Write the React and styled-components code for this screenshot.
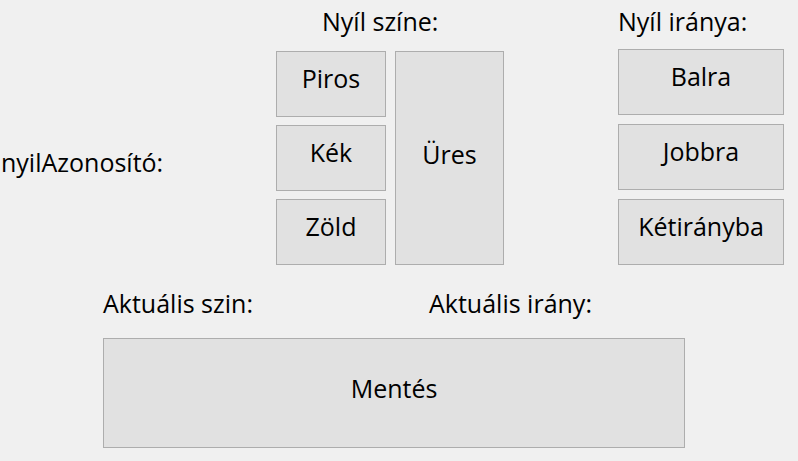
import React from 'react'
import styled, {createGlobalStyle} from 'styled-components'

const GlobalStyle = createGlobalStyle`
  html, body {
    margin: 0;
    padding: 0;
    background: #f0f0f0;
  }
  body {
    font-family: "Open Sans", "Noto Sans", sans-serif;
    color: #000;
  }
`

const Window = styled.div`
  width: 798px;
  height: 461px;
  background: #f0f0f0;
  overflow: hidden;
  display: flex;
  flex-direction: column;
  font-size: 25px;
`

const Top = styled.div`
  display: flex;
  flex-direction: row;
`

const IdLabel = styled.div`
  width: 276px;
  padding-left: 1px;
  box-sizing: border-box;
  line-height: 34px;
  padding-top: 145px;
`

const Group = styled.div`
  display: flex;
  flex-direction: column;
  margin-left: ${p => p.offset || 0}px;
`

const Heading = styled.div`
  line-height: 34px;
  padding-top: 4px;
  margin-left: ${p => p.indent || 0}px;
  margin-bottom: ${p => p.gap}px;
`

const ButtonRow = styled.div`
  display: flex;
  flex-direction: row;
  gap: 9px;
`

const ButtonStack = styled.div`
  display: flex;
  flex-direction: column;
  gap: ${p => p.gap || 8}px;
`

const Btn = styled.button`
  width: ${p => p.w}px;
  height: ${p => p.h}px;
  box-sizing: border-box;
  background: #e1e1e1;
  border: 1px solid #adadad;
  border-radius: 0;
  margin: 0;
  padding: 0 0 ${p => p.lift ?? 12}px;
  font-family: "Open Sans", "Noto Sans", sans-serif;
  font-size: 25px;
  line-height: 34px;
  color: #000;
  display: flex;
  align-items: center;
  justify-content: center;
`

const Bottom = styled.div`
  display: flex;
  flex-direction: column;
  padding-left: 103px;
  margin-top: 21px;
`

const LabelRow = styled.div`
  display: flex;
  flex-direction: row;
  line-height: 34px;
  margin-bottom: 18px;
`

const CurrentLabel = styled.div`
  width: ${p => p.w || 'auto'};
`

const App = () => (
  <Window>
    <GlobalStyle />
    <Top>
      <IdLabel>nyilAzonosító:</IdLabel>
      <Group>
        <Heading indent={46} gap={13}>Nyíl színe:</Heading>
        <ButtonRow>
          <ButtonStack gap={8}>
            <Btn w={110} h={66}>Piros</Btn>
            <Btn w={110} h={66}>Kék</Btn>
            <Btn w={110} h={66}>Zöld</Btn>
          </ButtonStack>
          <Btn w={109} h={214} lift={8}>Üres</Btn>
        </ButtonRow>
      </Group>
      <Group offset={114}>
        <Heading gap={11}>Nyíl iránya:</Heading>
        <ButtonStack gap={9}>
          <Btn w={166} h={66}>Balra</Btn>
          <Btn w={166} h={66}>Jobbra</Btn>
          <Btn w={166} h={66}>Kétirányba</Btn>
        </ButtonStack>
      </Group>
    </Top>
    <Bottom>
      <LabelRow>
        <CurrentLabel w="326px">Aktuális szin:</CurrentLabel>
        <CurrentLabel>Aktuális irány:</CurrentLabel>
      </LabelRow>
      <Btn w={582} h={110} lift={10}>Mentés</Btn>
    </Bottom>
  </Window>
)

export default App
